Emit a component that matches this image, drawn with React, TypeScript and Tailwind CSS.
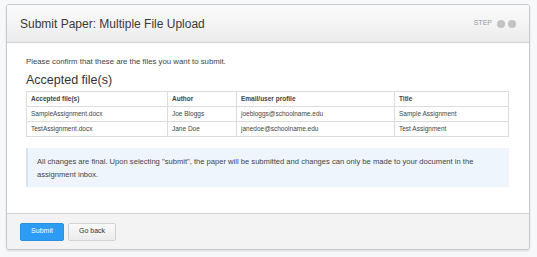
import React from "react";

const FILES = [
  { name: "SampleAssignment.docx", author: "Joe Bloggs", email: "joebloggs@schoolname.edu", title: "Sample Assignment" },
  { name: "TestAssignment.docx", author: "Jane Doe", email: "janedoe@schoolname.edu", title: "Test Assignment" },
];

export default function App() {
  return (
    <div className="w-[537px] h-[257px] bg-[#f6f8fa] pt-[4px] pl-[6px] font-['Liberation_Sans',Arial,sans-serif] text-[#333]">
      <div className="w-[524px] h-[246px] flex flex-col bg-white border border-[#c9c9c9] rounded-[3px] shadow-[0_1px_2px_rgba(0,0,0,0.12)] overflow-hidden">
        {/* header */}
        <div className="h-[38px] shrink-0 flex items-center justify-between pl-[13px] pr-[13px] bg-gradient-to-b from-[#fbfbfb] to-[#ececec] border-b border-[#d3d3d3]">
          <span className="text-[12px] text-[#3a3a3a]">Submit Paper: Multiple File Upload</span>
          <div className="flex items-center gap-[3px]">
            <span className="text-[7px] text-[#9a9a9a] mr-[2px]">STEP</span>
            <span className="w-[8px] h-[8px] rounded-full bg-[#c3c3c3]" />
            <span className="w-[8px] h-[8px] rounded-full bg-[#c3c3c3]" />
          </div>
        </div>

        {/* body */}
        <div className="flex-1 pl-[19px] pr-[19px] pt-[14px]">
          <p className="text-[7.8px] leading-[10px] text-[#444]">Please confirm that these are the files you want to submit.</p>
          <h2 className="mt-[6px] text-[12.5px] leading-[14px] text-[#333]">Accepted file(s)</h2>
          <table className="mt-[4px] w-[483px] border-collapse text-[6.5px] text-[#444]">
            <colgroup>
              <col className="w-[141px]" />
              <col className="w-[69px]" />
              <col className="w-[158px]" />
              <col />
            </colgroup>
            <thead>
              <tr className="h-[15px]">
                <th className="border border-[#dcdcdc] text-left font-bold pl-[4px]">Accepted file(s)</th>
                <th className="border border-[#dcdcdc] text-left font-bold pl-[4px]">Author</th>
                <th className="border border-[#dcdcdc] text-left font-bold pl-[4px]">Email/user profile</th>
                <th className="border border-[#dcdcdc] text-left font-bold pl-[4px]">Title</th>
              </tr>
            </thead>
            <tbody>
              {FILES.map((f) => (
                <tr key={f.name} className="h-[15px]">
                  <td className="border border-[#dcdcdc] pl-[4px]">{f.name}</td>
                  <td className="border border-[#dcdcdc] pl-[4px]">{f.author}</td>
                  <td className="border border-[#dcdcdc] pl-[4px]">{f.email}</td>
                  <td className="border border-[#dcdcdc] pl-[4px]">{f.title}</td>
                </tr>
              ))}
            </tbody>
          </table>

          <div className="mt-[11px] w-[483px] h-[39px] bg-[#eef5fc] border-l-2 border-[#d3e5f5] pl-[9px] pr-[12px] pt-[7px] text-[7.6px] leading-[13px] text-[#444]">
            All changes are final. Upon selecting "submit", the paper will be submitted and changes can only be made to your document in the assignment inbox.
          </div>
        </div>

        {/* footer */}
        <div className="h-[36px] shrink-0 flex items-center gap-[4px] pl-[13px] bg-[#f3f3f3] border-t border-[#cfcfcf]">
          <button className="w-[44px] h-[18px] rounded-[2px] bg-[#2c9cf4] text-white text-[7px] border border-[#2a90e2]">Submit</button>
          <button className="w-[48px] h-[18px] rounded-[2px] bg-gradient-to-b from-[#fafafa] to-[#ececec] text-[#333] text-[7px] border border-[#d2d2d2]">Go back</button>
        </div>
      </div>
    </div>
  );
}
